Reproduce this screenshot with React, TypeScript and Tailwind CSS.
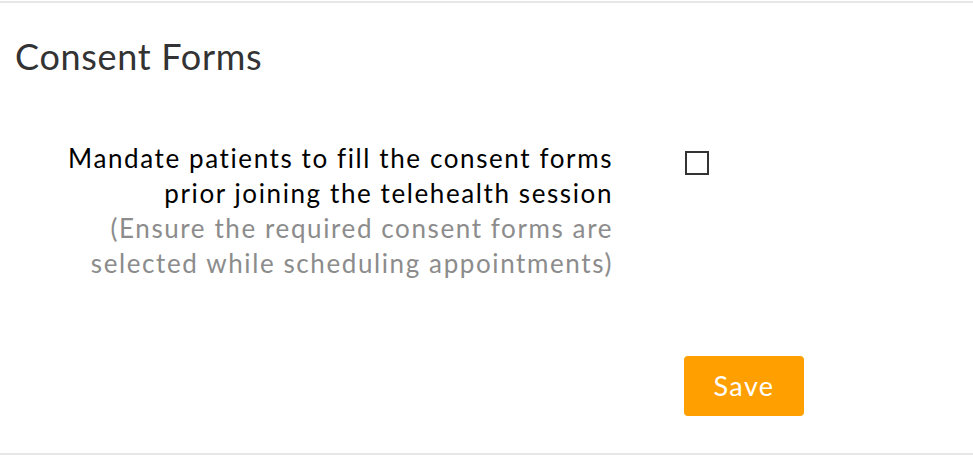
export default function App() {
  return (
    <div className="w-[973px] h-[458px] bg-white font-['Lato',sans-serif]">
      <div className="border-t-2 border-[#e6e6e6] mt-px" />
      <div className="h-[450px] flex flex-col">
        <h2 className="pl-[15px] pt-[33px] text-[36px] leading-[40px] tracking-[0.7px] text-[#333]">Consent Forms</h2>
        <div className="flex mt-[65px]">
          <div className="w-[613px] text-right text-[26px] leading-[35px] tracking-[1.6px]">
            <div className="text-black">Mandate patients to fill the consent forms</div>
            <div className="text-black">prior joining the telehealth session</div>
            <div className="text-[#8c8c8c]">(Ensure the required consent forms are</div>
            <div className="text-[#8c8c8c]">selected while scheduling appointments)</div>
          </div>
          <div className="ml-[72px] pt-[10px]">
            <div className="w-[24px] h-[24px] border-2 border-[#333] bg-white" />
          </div>
        </div>
        <div className="flex pl-[684px] mt-[75px]">
          <button className="w-[120px] h-[60px] rounded bg-[#ffa000] text-white text-[27px] tracking-[1.4px]">Save</button>
        </div>
      </div>
      <div className="border-t-2 border-[#e6e6e6]" />
    </div>
  );
}
